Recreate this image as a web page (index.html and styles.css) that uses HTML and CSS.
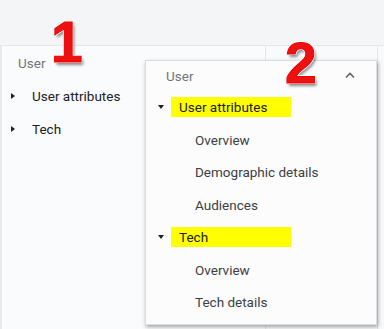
FILE: index.html
```html
<!DOCTYPE html>
<html lang="en">
<head>
    <meta charset="UTF-8">
    <meta name="viewport" content="width=device-width, initial-scale=1.0">
    <title>Dimensions menu</title>
    <link rel="stylesheet" href="styles.css">
</head>
<body>
    <div class="topbar"></div>
    <div class="main">
        <div class="left">
            <div class="heading">User</div>
            <div class="row"><span class="caret-right"></span>User attributes</div>
            <div class="row"><span class="caret-right"></span>Tech</div>
        </div>
        <div class="right"></div>
    </div>

    <!-- Expanded menu -->
    <div class="menu">
        <div class="menu-head">
            <span>User</span>
            <svg class="chevron" width="12" height="8" viewBox="0 0 12 8">
                <path d="M2 6.5 L6 2.5 L10 6.5" fill="none" stroke="#5f6368" stroke-width="1.6"/>
            </svg>
        </div>
        <div class="group"><span class="caret-down"></span><span class="mark">User attributes</span></div>
        <div class="item">Overview</div>
        <div class="item">Demographic details</div>
        <div class="item">Audiences</div>
        <div class="group"><span class="caret-down"></span><span class="mark">Tech</span></div>
        <div class="item">Overview</div>
        <div class="item">Tech details</div>
    </div>

    <!-- Annotations -->
    <div class="num num-1">1</div>
    <div class="num num-2">2</div>
</body>
</html>
```

FILE: styles.css
```css
body {
    margin: 0;
    padding: 0;
    font-family: Roboto, Arial, sans-serif;
    font-size: 13.5px;
    color: #202124;
    background: #f8f9fa;
    width: 384px;
    height: 329px;
    overflow: hidden;
    position: relative;
}

.topbar {
    height: 46px;
    background: #f4f5f6;
    border-bottom: 1px solid #e6e7e9;
    box-sizing: border-box;
}

.main {
    display: flex;
    height: 283px;
}

.left {
    width: 266px;
    border-right: 1px solid #e4e5e7;
    border-left: 2px solid #e8e9eb;
    background: #fafbfc;
    box-sizing: border-box;
}

.right {
    flex: 1;
    border-right: 1px solid #e4e5e7;
    margin-right: 6px;
    background: #f9fafb;
}

.heading {
    color: #70757a;
    padding: 9px 0 0 16px;
    height: 24px;
}

.row {
    display: flex;
    align-items: center;
    height: 33px;
    padding-left: 9px;
}

.caret-right {
    width: 0;
    height: 0;
    border-top: 3.5px solid transparent;
    border-bottom: 3.5px solid transparent;
    border-left: 4px solid #202124;
    margin-right: 17px;
}

/* Menu */
.menu {
    position: absolute;
    left: 145px;
    top: 60px;
    width: 232px;
    height: 265px;
    background: #fcfcfd;
    border: 1px solid #dcdde0;
    box-sizing: border-box;
    box-shadow: 1px 2px 4px rgba(0, 0, 0, 0.35);
}

.menu-head {
    display: flex;
    align-items: center;
    justify-content: space-between;
    height: 30px;
    padding: 0 20px 0 20px;
    color: #70757a;
}

.chevron {
    margin-top: -2px;
}

.group {
    display: flex;
    align-items: center;
    height: 32.5px;
    padding-left: 12px;
}

.caret-down {
    width: 0;
    height: 0;
    border-left: 3.5px solid transparent;
    border-right: 3.5px solid transparent;
    border-top: 4px solid #202124;
    margin-right: 7px;
}

.mark {
    background: #ffff00;
    width: 112px;
    height: 20px;
    line-height: 20px;
    padding-left: 8px;
}

.item {
    display: flex;
    align-items: center;
    height: 32.5px;
    padding-left: 49px;
    color: #3c4043;
}

/* Annotations */
.num {
    position: absolute;
    font-family: "Liberation Sans", Arial, sans-serif;
    font-weight: bold;
    font-size: 57px;
    line-height: 57px;
    color: #ee1111;
    -webkit-text-stroke: 1px #e00;
    text-shadow:
        -1px -1px 0 #fff, 1px -1px 0 #fff, -1px 1px 0 #fff, 1px 1px 0 #fff,
        2px 3px 3px rgba(0, 0, 0, 0.45);
}

.num-1 {
    left: 51px;
    top: 14px;
}

.num-2 {
    left: 285px;
    top: 35px;
}
```
